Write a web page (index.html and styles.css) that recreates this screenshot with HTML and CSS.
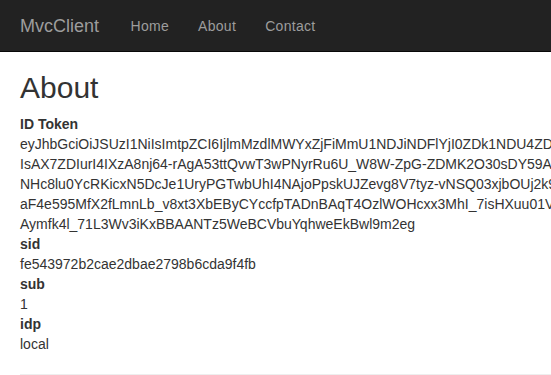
FILE: index.html
```html
<!DOCTYPE html>
<html lang="en">
<head>
  <meta charset="UTF-8">
  <meta name="viewport" content="width=device-width, initial-scale=1.0">
  <title>About - MvcClient</title>
  <link rel="stylesheet" href="styles.css">
</head>
<body>
  <!-- Top navigation -->
  <div class="navbar">
    <a class="navbar-brand" href="#">MvcClient</a>
    <ul class="nav">
      <li><a href="#">Home</a></li>
      <li><a href="#">About</a></li>
      <li><a href="#">Contact</a></li>
    </ul>
  </div>

  <!-- Page body -->
  <div class="body-content">
    <h2>About</h2>

    <dl>
      <dt>ID Token</dt>
      <dd class="token">
        <span>eyJhbGciOiJSUzI1NiIsImtpZCI6IjlmMzdlMWYxZjFiMmU1NDJiNDFlYjI0ZDk1NDU4ZDAzIiwidHlwIjoiSldUIn0</span>
        <span>IsAX7ZDIurI4IXzA8nj64-rAgA53ttQvwT3wPNyrRu6U_W8W-ZpG-ZDMK2O30sDY59AbT2kLmQ</span>
        <span>NHc8lu0YcRKicxN5DcJe1UryPGTwbUhI4NAjoPpskUJZevg8V7tyz-vNSQ03xjbOUj2k9Rt</span>
        <span>aF4e595MfX2fLmnLb_v8xt3XbEByCYccfpTADnBAqT4OzlWOHcxx3MhI_7isHXuu01VqZ</span>
        <span>Aymfk4l_71L3Wv3iKxBBAANTz5WeBCVbuYqhweEkBwl9m2eg</span>
      </dd>
      <dt>sid</dt>
      <dd>fe543972b2cae2dbae2798b6cda9f4fb</dd>
      <dt>sub</dt>
      <dd>1</dd>
      <dt>idp</dt>
      <dd>local</dd>
    </dl>

    <hr>
  </div>
</body>
</html>
```

FILE: styles.css
```css
/* Basic Reset */
body, h2, dl, dt, dd, ul, li, hr {
  margin: 0;
  padding: 0;
  box-sizing: border-box;
}

html, body {
  overflow: hidden;
}

body {
  font-family: "Liberation Sans", Arial, sans-serif;
  font-size: 14px;
  line-height: 20px;
  color: #333;
  background-color: #fff;
}

/* Dark navbar */
.navbar {
  display: flex;
  align-items: center;
  height: 51px;
  padding: 0 5px;
  background-color: #222;
  border-bottom: 1px solid #080808;
}

.navbar-brand {
  padding: 15px 17px 15px 15px;
  font-size: 18px;
  line-height: 20px;
  color: #9d9d9d;
  text-decoration: none;
}

.nav {
  display: flex;
  list-style: none;
}

.nav a {
  display: block;
  padding: 15px 14.5px;
  color: #9d9d9d;
  letter-spacing: 0.3px;
  text-decoration: none;
}

/* Content */
.body-content {
  padding: 0 20px;
}

h2 {
  margin-top: 19px;
  margin-bottom: 10px;
  font-size: 30px;
  font-weight: 500;
  line-height: 33px;
}

dl {
  margin-bottom: 20px;
}

dt {
  font-weight: bold;
}

.token span {
  display: block;
  white-space: nowrap;
}

hr {
  margin-top: 20px;
  margin-right: -20px;
  border: 0;
  border-top: 1px solid #eee;
}
```
